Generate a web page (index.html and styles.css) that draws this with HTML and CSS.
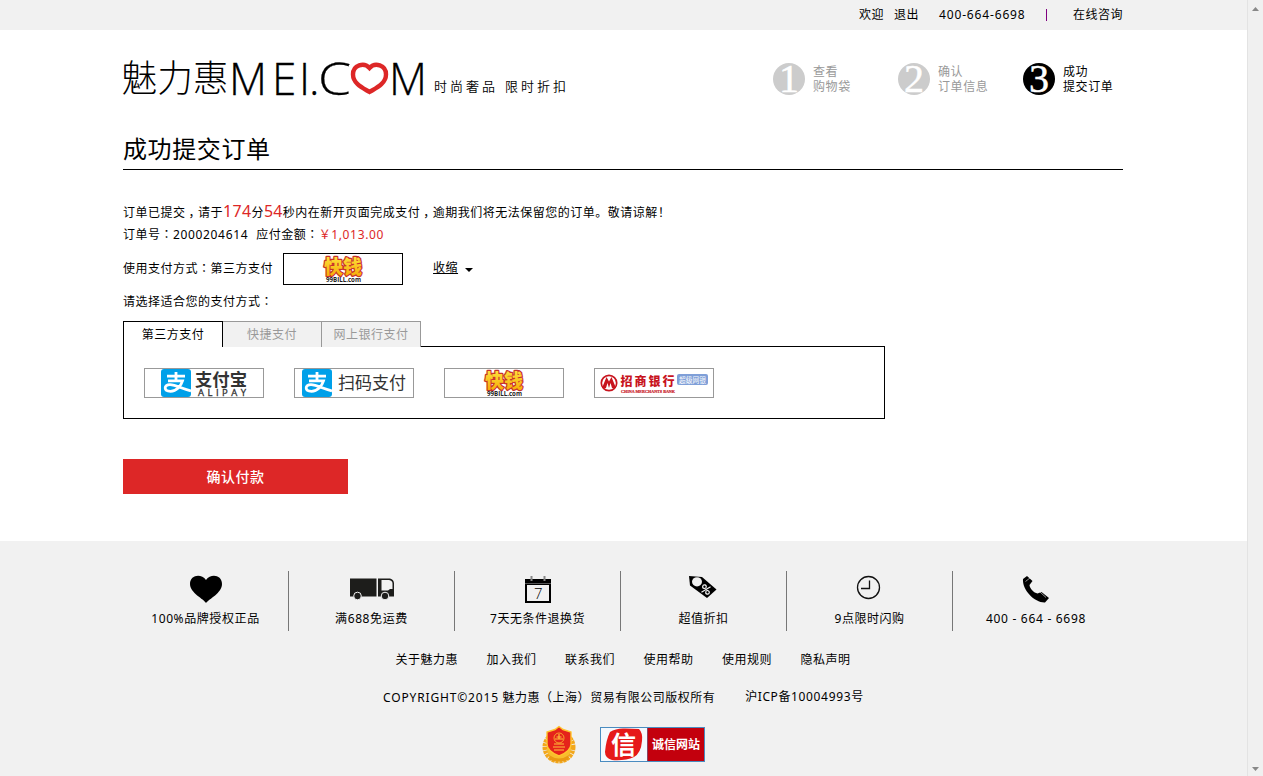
FILE: index.html
```html
<!DOCTYPE html>
<html lang="zh-CN">
<head>
<meta charset="utf-8">
<title>成功提交订单</title>
<link rel="stylesheet" href="styles.css">
</head>
<body>
<svg class="defs" width="0" height="0">
  <defs>
    <linearGradient id="gold" x1="0" y1="0" x2="0" y2="1"><stop offset="0" stop-color="#fff04a"/><stop offset="1" stop-color="#f5a400"/></linearGradient>
    <symbol id="kq" viewBox="0 0 118 28">
      <text x="40" y="18.500" font-size="19.500" font-weight="900" textLength="38" lengthAdjust="spacingAndGlyphs" fill="url(#gold)" stroke="#c8322c" stroke-width="2.400" paint-order="stroke" stroke-linejoin="round">快钱</text>
      <text class="en" x="42" y="27.300" font-size="7" font-weight="700" textLength="35" lengthAdjust="spacingAndGlyphs" fill="#222">99BILL.com</text>
    </symbol>
    <symbol id="zhi" viewBox="0 0 30 28">
      <rect width="30" height="28" rx="3" fill="#00a0e9"/>
      <path d="M6 7.200H24M15 3V11.600M7 11.900H21.500C20 17 15.500 22.300 9.500 22.300C2.500 22.300 2.500 15.700 9 15.700C14 15.700 21 19.500 30 22" fill="none" stroke="#fff" stroke-width="2.800"/>
    </symbol>
  </defs>
</svg>
<div class="window">
  <div class="page">
    <div class="topbar"><div class="wrap topbar-in">
      <span class="t-hi">欢迎</span><span class="t-out">退出</span><span class="t-tel">400-664-6698</span><span class="t-bar"></span><span>在线咨询</span>
    </div></div>
    <div class="wrap header">
      <svg class="logo" width="450" height="56" viewBox="0 0 450 56">
        <text class="logo-cn" x="-1.500" y="38" textLength="107" lengthAdjust="spacingAndGlyphs">魅力惠</text>
        <g class="logo-en">
          <text x="106" y="40.500">M</text><text x="149" y="40.500">E</text><text x="176" y="40.500">I</text><text x="186" y="40.500">.</text>
          <text x="195" y="40.500" textLength="33" lengthAdjust="spacingAndGlyphs">C</text><text x="266" y="40.500">M</text>
        </g>
        <path d="M246.500 14C241 8 230 11 230 20.500C230 30 241 34.500 246.500 38C252 34.500 263 30 263 20.500C263 11 252 8 246.500 14Z" fill="none" stroke="#dd2727" stroke-width="4.400"/>
        <text class="logo-sub" x="311" y="37">时尚奢品</text><text class="logo-sub" x="382" y="37">限时折扣</text>
      </svg>
      <div class="steps">
        <div class="step"><span class="num">1</span><span>查看<br>购物袋</span></div>
        <div class="step"><span class="num">2</span><span>确认<br>订单信息</span></div>
        <div class="step on"><span class="num">3</span><span>成功<br>提交订单</span></div>
      </div>
    </div>
    <div class="wrap main">
      <h1>成功提交订单</h1>
      <p class="line l1">订单已提交<span class="cm">，</span>请于<b>174</b>分<b>54</b>秒内在新开页面完成支付<span class="cm">，</span>逾期我们将无法保留您的订单。敬请谅解<span>！</span></p>
      <p class="line l2">订单号<i lang="zh-TW">：</i><span class="d">2000204614</span><span class="amt">应付金额<i lang="zh-TW">：</i></span><span class="red">￥<span class="d">1,013.00</span></span></p>
      <div class="method"><span class="mname">使用支付方式<i lang="zh-TW">：</i>第三方支付</span>
        <span class="chosen"><svg width="118" height="30" viewBox="0 -1 118 30"><use href="#kq" width="118" height="28"/></svg></span>
        <span class="fold">收缩</span><span class="caret"></span></div>
      <p class="line l3">请选择适合您的支付方式<i lang="zh-TW">：</i></p>
      <div class="tabs"><span class="tab cur">第三方支付</span><span class="tab">快捷支付</span><span class="tab">网上银行支付</span><span class="tabs-rest"></span></div>
      <div class="panel">
        <span class="card"><svg width="118" height="28">
          <use href="#zhi" x="16" width="30" height="28"/>
          <text x="50" y="16.500" font-size="17.500" font-weight="700" fill="#333" textLength="52" lengthAdjust="spacingAndGlyphs">支付宝</text>
          <text class="en" x="53" y="27" font-size="9.500" fill="#333" stroke="#333" stroke-width=".3" textLength="48">ALIPAY</text></svg></span>
        <span class="card"><svg width="118" height="28">
          <use href="#zhi" x="7" width="30" height="28"/>
          <text x="43" y="20" font-size="17" fill="#333" textLength="68">扫码支付</text></svg></span>
        <span class="card"><svg width="118" height="28"><use href="#kq" width="118" height="28"/></svg></span>
        <span class="card"><svg width="118" height="28">
          <circle cx="14" cy="14" r="7.700" fill="#fff" stroke="#c8141e" stroke-width="1.700"/>
          <path d="M7 19L11.500 8L14 12.500L16.500 8L21 19H17L15.500 14L14 19L12.500 14L11 19Z" fill="#c8141e"/>
          <g fill="#c8141e"><text y="16.800" font-size="12" font-weight="900" x="25.500 39.500 53.500 67.500">招商银行</text>
          <text class="serif" x="26" y="23.500" font-size="4.600" font-weight="700" textLength="54" lengthAdjust="spacingAndGlyphs" stroke="#c8141e" stroke-width=".2">CHINA MERCHANTS BANK</text></g>
          <rect x="82" y="5" width="31" height="11" rx="2" fill="#7f9fd8"/>
          <text x="84" y="13.500" font-size="8" fill="#fff" textLength="27" lengthAdjust="spacingAndGlyphs">超级网银</text></svg></span>
      </div>
      <div class="pay">确认付款</div>
    </div>
    <div class="footer">
      <div class="wrap feats">
        <div class="feat"><svg width="46" height="32" viewBox="0 0 46 32"><path d="M23 32C21 28 7 22 7 13C7 4 18 2 23 9C28 2 39 4 39 13C39 22 26 28 23 32Z"/></svg><span class="d1">100%品牌授权正品</span></div>
        <div class="feat"><svg width="46" height="32" viewBox="0 0 46 32"><g fill="#1d1d1b"><path d="M1 7.500H27.500V25.500H1ZM29 7.500H41Q45 8.500 45 12.500V25.500H29Z"/><path d="M32.500 9H40Q43.500 9.500 43.500 12.500V18H41L39 19.500H32.500Z" fill="#f1f1f1"/><g stroke="#f1f1f1"><circle cx="8.500" cy="25" r="3.800"/><circle cx="36" cy="25" r="3.800"/></g></g></svg><span class="d2">满688免运费</span></div>
        <div class="feat"><svg width="46" height="32" viewBox="0 0 46 32"><path d="M10 8H36V32H10Z"/><path d="M12 14H34V30H12Z" fill="#f1f1f1"/><path d="M16.500 5V10M29.500 5V10" stroke="#888" stroke-width="2"/><path d="M10 12.500H36" stroke="#555"/><text class="en" x="19" y="27.500" font-size="15" font-weight="300">7</text></svg><span>7天无条件退换货</span></div>
        <div class="feat"><svg width="46" height="32" viewBox="0 0 46 32"><path d="M8 5L21 6L35.500 18.500L26 27L9 14.500Z"/><ellipse cx="16" cy="10.800" rx="5" ry="4.600" fill="#f1f1f1"/><g transform="translate(25 18.500) rotate(10)" fill="none" stroke="#f1f1f1" stroke-width="1.200"><circle cx="-2" cy="-2.500" r="1.800"/><circle cx="2" cy="2.500" r="1.800"/><path d="M-4 3.500L4-3.500"/></g></svg><span>超值折扣</span></div>
        <div class="feat"><svg width="46" height="32" viewBox="0 0 46 32"><circle cx="21.500" cy="16.500" r="11" fill="none" stroke="#111" stroke-width="1.300"/><path d="M22.500 9.500V17.500H14" fill="none" stroke="#111" stroke-width="1.300"/></svg><span>9点限时闪购</span></div>
        <div class="feat"><svg width="46" height="32" viewBox="0 0 46 32"><path d="M10 8L14 5L19.500 10L16.500 14C16.500 17 21 22 24.500 22.500L28.500 21L36 27L32 31.500C22 32 9 19 10 8Z"/><path d="M12.500 10.500L17.500 6.500M27 21L33 26.500" stroke="#f1f1f1" stroke-width=".6"/></svg><span class="d3">400 - 664 - 6698</span></div>
      </div>
      <div class="wrap links"><span>关于魅力惠</span><span>加入我们</span><span>联系我们</span><span>使用帮助</span><span>使用规则</span><span>隐私声明</span></div>
      <div class="wrap copy"><span><span class="cp">COPYRIGHT©2015</span> 魅力惠<span lang="zh-TW" class="tc">（</span>上海<span lang="zh-TW" class="tc">）</span>贸易有限公司版权所有</span><span class="icp">沪ICP备<span class="d">10004993</span>号</span></div>
      <div class="wrap badges">
        <svg width="36" height="36" viewBox="0 0 36 36"><circle cx="18" cy="21" r="14" fill="none" stroke="#f2a71c" stroke-width="5" stroke-dasharray="3 .7"/><circle cx="18" cy="22" r="12" fill="#f8bd2d"/><path d="M18 .5L22 3.500L30 6V18C30 24 23 28 18 30C13 28 6 24 6 18V6L14 3.500Z" fill="#e5231b" stroke="#ffc52e" stroke-width="1.400"/><circle cx="18" cy="12" r="5" fill="none" stroke="#f8a32c"/><path d="M14 13H22M15.500 11H20.500M18 8V13M13 18H23M12 21H24M13 24H23" stroke="#ffc23c" stroke-width="1.200"/><path d="M8 29Q18 36 28 29L27 34Q18 37 9 34Z" fill="#e99a12"/></svg>
        <svg width="105" height="35"><rect width="105" height="35" fill="#4a8cc0"/><rect x="1" y="1" width="46" height="33" fill="#f4f8fd"/><rect x="47.500" y="1" width="56.500" height="33" fill="#c3000d"/><path d="M10 5Q16 1 25 1.500L39 2Q43 6 42 14Q41 26 34 30Q25 34 12 33Q5 31 5 25Q6 13 10 5Z" fill="#e61919"/><text x="11" y="27" font-size="25" font-weight="700" fill="#fff">信</text><text x="52" y="21.500" font-size="12" font-weight="700" fill="#fff" textLength="48">诚信网站</text></svg>
      </div>
    </div>
  </div>
  <div class="scroll"><svg width="7" height="4"><path d="M0 4L3.500 0L7 4Z" fill="#888"/></svg><svg width="7" height="4"><path d="M0 0L3.500 4L7 0Z" fill="#888"/></svg></div>
</div>
</body>
</html>
```
FILE: styles.css
```css
* { box-sizing: border-box; }
body { margin: 0; font: 12px/16px "Noto Sans", "Noto Sans CJK SC", sans-serif; letter-spacing: .5px; color: #000; background: #fff; white-space: nowrap; overflow: hidden; }
svg { display: block; letter-spacing: 0; overflow: visible; }
svg text { font-family: "Noto Sans CJK SC", sans-serif; }
svg text.en { font-family: "Open Sans", sans-serif; }
svg text.serif { font-family: "Liberation Serif", serif; }
.defs { position: absolute; }
h1, p { margin: 0; font-weight: 400; }
b { font-weight: 400; }
i, .tc { font-style: normal; font-family: "Noto Sans CJK TC", sans-serif; }
.window { display: flex; height: 776px; }
.page { width: 1247px; display: flex; flex-direction: column; }
.scroll { width: 16px; background: #f0f0f0; border-left: 1px solid #e3e3e3; display: flex; flex-direction: column; justify-content: space-between; align-items: center; padding: 7px 0 5px; }
.wrap { width: 1000px; margin-left: 123px; }
.topbar { height: 30px; background: #f1f1f1; }
.topbar-in { display: flex; justify-content: flex-end; align-items: center; height: 30px; }
.t-hi { margin-right: 10px; }
.t-out { margin-right: 20px; }
.t-tel { width: 87px; letter-spacing: .85px; }
.t-bar { width: 1px; height: 12px; background: #800080; margin: 0 26px 0 20px; }
.header { height: 100px; display: flex; justify-content: space-between; padding-top: 24px; }
.logo-cn { font-size: 37px; font-weight: 300; }
.logo-en text { font-family: "Open Sans", sans-serif; font-size: 44px; font-weight: 300; stroke: #000; stroke-width: .3px; }
.logo-sub { font-size: 13px; font-weight: 350; letter-spacing: 3px; }
.steps { display: flex; padding: 9px 0 0; }
.step { width: 125px; display: flex; gap: 8px; color: #999; line-height: 15px; height: 32px; }
.step > span:last-child { padding-top: 1px; letter-spacing: .6px; }
.step:last-child { width: 100px; }
.num { width: 32px; height: 32px; border-radius: 50%; background: #ccc; color: #fff; font: 40px/31px "Liberation Serif", serif; -webkit-text-stroke: .5px #fff; text-align: center; letter-spacing: 0; }
.on { color: #000; }
.on .num { background: #000; }
.main { height: 411px; }
h1 { height: 40px; border-bottom: 1px solid #000; font-size: 24px; line-height: 38px; letter-spacing: .6px; }
.line { line-height: 22px; height: 22px; }
.l1 { margin-top: 30px; }
.l1 b { font-size: 16px; letter-spacing: .3px; color: #dd2727; }
.l2 { margin-top: 1px; }
.cm { padding-left: 3px; letter-spacing: -2.5px; }
.d { letter-spacing: .65px; }
.amt { margin-left: 8px; }
.red { color: #dd2727; }
.method { display: flex; align-items: center; height: 32px; margin-top: 8px; }
.mname, .fold { margin-top: -2px; }
.chosen { width: 120px; height: 32px; border: 1px solid #000; margin: 0 30px 0 10px; }
.fold { text-decoration: underline; }
.caret { border: 4px solid transparent; border-top-color: #000; border-bottom: 0; margin: 1px 0 0 7px; }
.l3 { margin-top: 5px; }
.tabs { display: flex; width: 762px; height: 26px; margin-top: 9px; }
.tab { width: 99px; height: 26px; border: 1px solid #999; border-left: 0; border-bottom: 0; background: #f1f1f1; color: #999; text-align: center; line-height: 26px; }
.cur { width: 100px; background: #fff; border: 1px solid #000; border-bottom: 0; color: #000; }
.tabs-rest { flex: 1; border-bottom: 1px solid #000; }
.panel { width: 762px; height: 72px; border: 1px solid #000; border-top: 0; display: flex; gap: 30px; padding: 21px 20px; }
.card { width: 120px; height: 30px; border: 1px solid #999; }
.pay { width: 225px; height: 35px; margin-top: 40px; background: #dd2727; color: #fff; font-size: 14px; line-height: 36px; text-align: center; font-weight: 500; }
.footer { height: 235px; background: #f1f1f1; padding-top: 30px; }
.feats { display: flex; }
.feat { width: 166px; height: 60px; border-right: 1px solid #777; display: flex; flex-direction: column; align-items: center; }
.feat:last-child { border: 0; }
.feat > span { margin-top: 8px; }
.d1, .d2 { letter-spacing: .6px; }
.d3 { letter-spacing: .7px; }
.links { display: flex; gap: 28.500px; padding-left: 272.500px; margin-top: 21px; }
.copy { display: flex; gap: 30px; padding-left: 260px; margin-top: 21px; }
.cp { letter-spacing: .85px; }
.icp { letter-spacing: .6px; }
.badges { display: flex; gap: 23px; padding-left: 418px; margin-top: 20px; align-items: center; }
```
